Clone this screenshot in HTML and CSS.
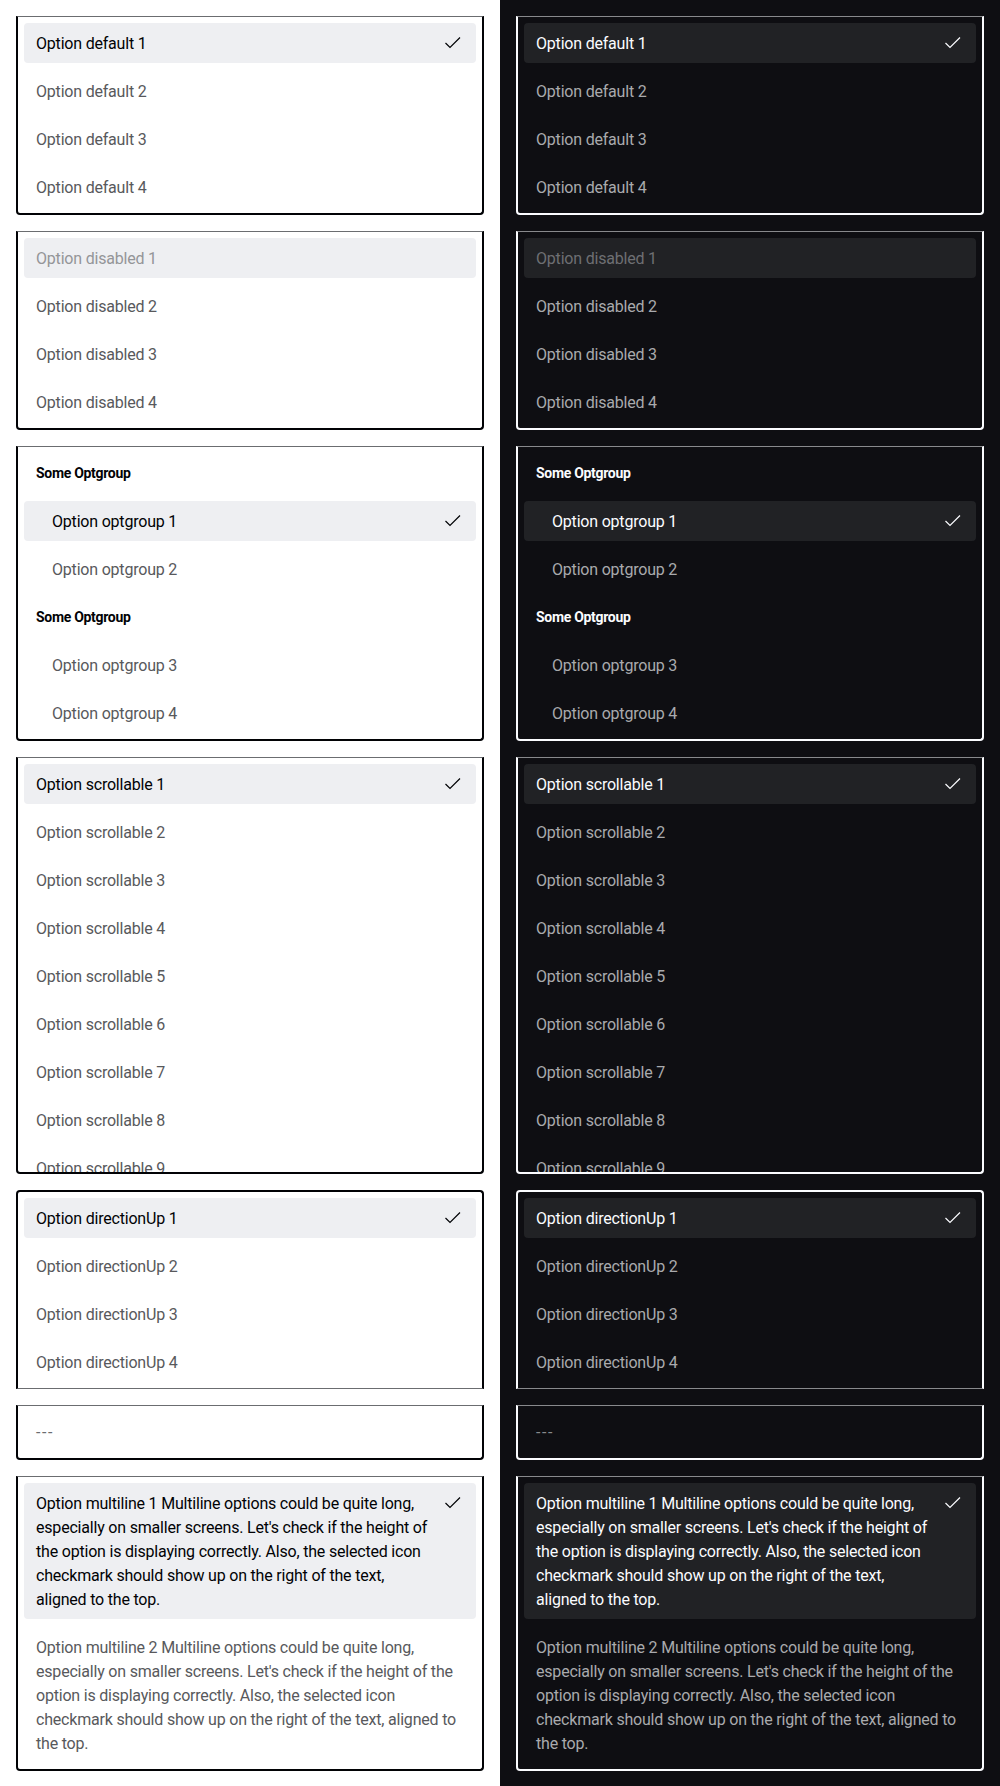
FILE: index.html
```html
<!DOCTYPE html>
<html lang="en">
<head>
<meta charset="utf-8">
<title>Select options</title>
<link rel="stylesheet" href="styles.css">
</head>
<body>
<div class="page">
  <section class="panel light">
    <ul class="list">
      <li class="opt sel"><span class="txt">Option default 1</span><svg class="chk" viewBox="0 0 24 24"><path d="M5.5 12 L10 16.5 L20 6.5"/></svg></li>
      <li class="opt"><span class="txt">Option default 2</span></li>
      <li class="opt"><span class="txt">Option default 3</span></li>
      <li class="opt"><span class="txt">Option default 4</span></li>
    </ul>
    <ul class="list">
      <li class="opt hl dis"><span class="txt">Option disabled 1</span></li>
      <li class="opt"><span class="txt">Option disabled 2</span></li>
      <li class="opt"><span class="txt">Option disabled 3</span></li>
      <li class="opt"><span class="txt">Option disabled 4</span></li>
    </ul>
    <ul class="list">
      <li class="group">Some Optgroup</li>
      <li class="opt sel ind"><span class="txt">Option optgroup 1</span><svg class="chk" viewBox="0 0 24 24"><path d="M5.5 12 L10 16.5 L20 6.5"/></svg></li>
      <li class="opt ind"><span class="txt">Option optgroup 2</span></li>
      <li class="group">Some Optgroup</li>
      <li class="opt ind"><span class="txt">Option optgroup 3</span></li>
      <li class="opt ind"><span class="txt">Option optgroup 4</span></li>
    </ul>
    <ul class="list scroll">
      <li class="opt sel"><span class="txt">Option scrollable 1</span><svg class="chk" viewBox="0 0 24 24"><path d="M5.5 12 L10 16.5 L20 6.5"/></svg></li>
      <li class="opt"><span class="txt">Option scrollable 2</span></li>
      <li class="opt"><span class="txt">Option scrollable 3</span></li>
      <li class="opt"><span class="txt">Option scrollable 4</span></li>
      <li class="opt"><span class="txt">Option scrollable 5</span></li>
      <li class="opt"><span class="txt">Option scrollable 6</span></li>
      <li class="opt"><span class="txt">Option scrollable 7</span></li>
      <li class="opt"><span class="txt">Option scrollable 8</span></li>
      <li class="opt"><span class="txt">Option scrollable 9</span></li>
    </ul>
    <ul class="list up">
      <li class="opt sel"><span class="txt">Option directionUp 1</span><svg class="chk" viewBox="0 0 24 24"><path d="M5.5 12 L10 16.5 L20 6.5"/></svg></li>
      <li class="opt"><span class="txt">Option directionUp 2</span></li>
      <li class="opt"><span class="txt">Option directionUp 3</span></li>
      <li class="opt"><span class="txt">Option directionUp 4</span></li>
    </ul>
    <ul class="list">
      <li class="opt empty"><span class="txt">---</span></li>
    </ul>
    <ul class="list">
      <li class="opt sel"><span class="txt">Option multiline 1 Multiline options could be quite long, especially on smaller screens. Let's check if the height of the option is displaying correctly. Also, the selected icon checkmark should show up on the right of the text, aligned to the top.</span><svg class="chk" viewBox="0 0 24 24"><path d="M5.5 12 L10 16.5 L20 6.5"/></svg></li>
      <li class="opt"><span class="txt">Option multiline 2 Multiline options could be quite long, especially on smaller screens. Let's check if the height of the option is displaying correctly. Also, the selected icon checkmark should show up on the right of the text, aligned to the top.</span></li>
    </ul>
  </section>
  <section class="panel dark">
    <ul class="list">
      <li class="opt sel"><span class="txt">Option default 1</span><svg class="chk" viewBox="0 0 24 24"><path d="M5.5 12 L10 16.5 L20 6.5"/></svg></li>
      <li class="opt"><span class="txt">Option default 2</span></li>
      <li class="opt"><span class="txt">Option default 3</span></li>
      <li class="opt"><span class="txt">Option default 4</span></li>
    </ul>
    <ul class="list">
      <li class="opt hl dis"><span class="txt">Option disabled 1</span></li>
      <li class="opt"><span class="txt">Option disabled 2</span></li>
      <li class="opt"><span class="txt">Option disabled 3</span></li>
      <li class="opt"><span class="txt">Option disabled 4</span></li>
    </ul>
    <ul class="list">
      <li class="group">Some Optgroup</li>
      <li class="opt sel ind"><span class="txt">Option optgroup 1</span><svg class="chk" viewBox="0 0 24 24"><path d="M5.5 12 L10 16.5 L20 6.5"/></svg></li>
      <li class="opt ind"><span class="txt">Option optgroup 2</span></li>
      <li class="group">Some Optgroup</li>
      <li class="opt ind"><span class="txt">Option optgroup 3</span></li>
      <li class="opt ind"><span class="txt">Option optgroup 4</span></li>
    </ul>
    <ul class="list scroll">
      <li class="opt sel"><span class="txt">Option scrollable 1</span><svg class="chk" viewBox="0 0 24 24"><path d="M5.5 12 L10 16.5 L20 6.5"/></svg></li>
      <li class="opt"><span class="txt">Option scrollable 2</span></li>
      <li class="opt"><span class="txt">Option scrollable 3</span></li>
      <li class="opt"><span class="txt">Option scrollable 4</span></li>
      <li class="opt"><span class="txt">Option scrollable 5</span></li>
      <li class="opt"><span class="txt">Option scrollable 6</span></li>
      <li class="opt"><span class="txt">Option scrollable 7</span></li>
      <li class="opt"><span class="txt">Option scrollable 8</span></li>
      <li class="opt"><span class="txt">Option scrollable 9</span></li>
    </ul>
    <ul class="list up">
      <li class="opt sel"><span class="txt">Option directionUp 1</span><svg class="chk" viewBox="0 0 24 24"><path d="M5.5 12 L10 16.5 L20 6.5"/></svg></li>
      <li class="opt"><span class="txt">Option directionUp 2</span></li>
      <li class="opt"><span class="txt">Option directionUp 3</span></li>
      <li class="opt"><span class="txt">Option directionUp 4</span></li>
    </ul>
    <ul class="list">
      <li class="opt empty"><span class="txt">---</span></li>
    </ul>
    <ul class="list">
      <li class="opt sel"><span class="txt">Option multiline 1 Multiline options could be quite long, especially on smaller screens. Let's check if the height of the option is displaying correctly. Also, the selected icon checkmark should show up on the right of the text, aligned to the top.</span><svg class="chk" viewBox="0 0 24 24"><path d="M5.5 12 L10 16.5 L20 6.5"/></svg></li>
      <li class="opt"><span class="txt">Option multiline 2 Multiline options could be quite long, especially on smaller screens. Let's check if the height of the option is displaying correctly. Also, the selected icon checkmark should show up on the right of the text, aligned to the top.</span></li>
    </ul>
  </section>
</div>
</body>
</html>
```

FILE: styles.css
```css
* { box-sizing: border-box; }
html, body { margin: 0; padding: 0; }
body {
  font-family: Roboto, "Liberation Sans", sans-serif;
  font-size: 16px;
  line-height: 24px;
  letter-spacing: -0.2px;
}
.page {
  display: grid;
  grid-template-columns: 500px 500px;
  width: 1000px;
  min-height: 1786px;
}
.panel {
  padding: 16px;
  display: flex;
  flex-direction: column;
  gap: 16px;
}
.light { background: #ffffff; --border: #010205; --sep: #6b6d70; --hl: #eeeff2; --text: #58595c; --strong: #010205; --dis: #949598; --empty: #6b6d70; }
.dark { background: #0e0e12; --border: #fbfcff; --sep: #88898c; --hl: #212225; --text: #a9aaad; --strong: #fbfcff; --dis: #6e6f73; --empty: #88898c; }

.list {
  list-style: none;
  margin: 0;
  padding: 6px;
  display: flex;
  flex-direction: column;
  gap: 8px;
  border: 2px solid var(--border);
  border-top: 1px solid var(--sep);
  border-radius: 0 0 4px 4px;
  color: var(--text);
}
.list.up {
  border-top: 2px solid var(--border);
  border-bottom: 1px solid var(--sep);
  border-radius: 4px 4px 0 0;
}
.list.scroll {
  height: 417px;
  overflow: hidden;
}
.opt {
  flex: none;
  display: flex;
  align-items: flex-start;
  gap: 8px;
  padding: 9px 12px 7px;
  min-height: 40px;
  border-radius: 4px;
}
.opt .txt { flex: 1; }
.opt.ind { padding-left: 28px; }
.opt.sel, .opt.hl { background: var(--hl); color: var(--strong); }
.opt.dis { color: var(--dis); }
.opt.empty { color: var(--empty); }
.opt.empty .txt { letter-spacing: 1.6px; }
.chk {
  flex: none;
  width: 24px;
  height: 24px;
  margin-top: -1px;
  margin-bottom: 1px;
  fill: none;
  stroke: var(--strong);
  stroke-width: 1.2;
}
.group {
  flex: none;
  height: 40px;
  display: flex;
  align-items: center;
  padding: 0 12px;
  font-size: 14px;
  font-weight: 700;
  letter-spacing: -0.3px;
  color: var(--strong);
}
```
